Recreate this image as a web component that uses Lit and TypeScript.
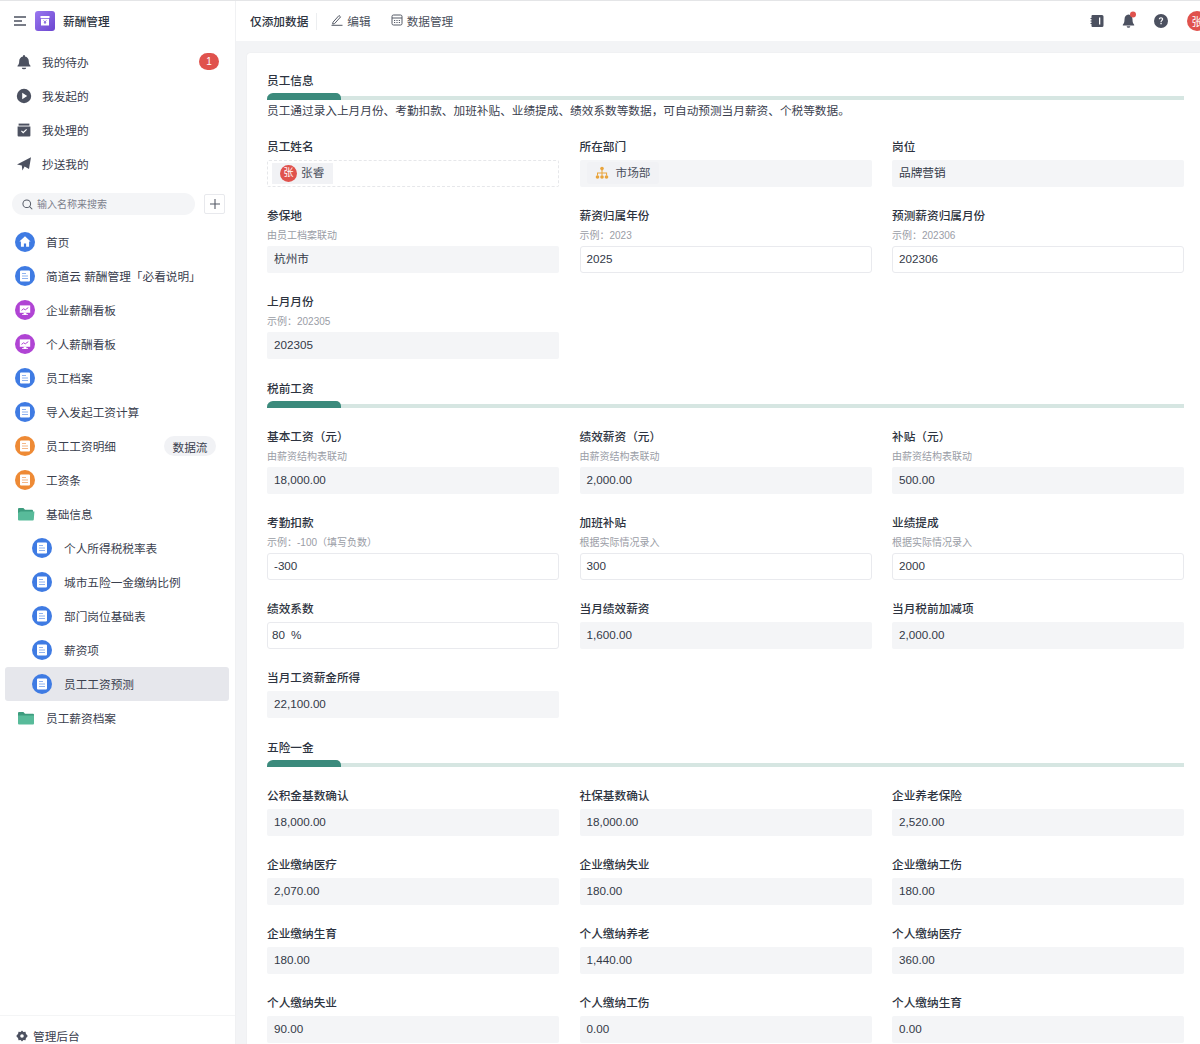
import { LitElement, html, css, svg } from "lit";
import { customElement } from "lit/decorators.js";

type Field = {
  label: string;
  help?: string;
  value?: string;
  edit?: boolean;
  kind?: "user" | "dept" | "percent";
};

type Section = { title: string; desc?: string; fields: Field[] };

const SECTIONS: Section[] = [
  {
    title: "员工信息",
    desc: "员工通过录入上月月份、考勤扣款、加班补贴、业绩提成、绩效系数等数据，可自动预测当月薪资、个税等数据。",
    fields: [
      { label: "员工姓名", kind: "user" },
      { label: "所在部门", kind: "dept" },
      { label: "岗位", value: "品牌营销" },
      { label: "参保地", help: "由员工档案联动", value: "杭州市" },
      { label: "薪资归属年份", help: "示例：2023", value: "2025", edit: true },
      { label: "预测薪资归属月份", help: "示例：202306", value: "202306", edit: true },
      { label: "上月月份", help: "示例：202305", value: "202305" },
    ],
  },
  {
    title: "税前工资",
    fields: [
      { label: "基本工资（元）", help: "由薪资结构表联动", value: "18,000.00" },
      { label: "绩效薪资（元）", help: "由薪资结构表联动", value: "2,000.00" },
      { label: "补贴（元）", help: "由薪资结构表联动", value: "500.00" },
      { label: "考勤扣款", help: "示例：-100（填写负数）", value: "-300", edit: true },
      { label: "加班补贴", help: "根据实际情况录入", value: "300", edit: true },
      { label: "业绩提成", help: "根据实际情况录入", value: "2000", edit: true },
      { label: "绩效系数", value: "80", edit: true, kind: "percent" },
      { label: "当月绩效薪资", value: "1,600.00" },
      { label: "当月税前加减项", value: "2,000.00" },
      { label: "当月工资薪金所得", value: "22,100.00" },
    ],
  },
  {
    title: "五险一金",
    fields: [
      { label: "公积金基数确认", value: "18,000.00" },
      { label: "社保基数确认", value: "18,000.00" },
      { label: "企业养老保险", value: "2,520.00" },
      { label: "企业缴纳医疗", value: "2,070.00" },
      { label: "企业缴纳失业", value: "180.00" },
      { label: "企业缴纳工伤", value: "180.00" },
      { label: "企业缴纳生育", value: "180.00" },
      { label: "个人缴纳养老", value: "1,440.00" },
      { label: "个人缴纳医疗", value: "360.00" },
      { label: "个人缴纳失业", value: "90.00" },
      { label: "个人缴纳工伤", value: "0.00" },
      { label: "个人缴纳生育", value: "0.00" },
    ],
  },
];

const docGlyph = (line: string) => svg`
  <path d="M6 4.600h8a1 1 0 0 1 1 1v9a1 1 0 0 1-1 1H6a1 1 0 0 1-1-1v-9a1 1 0 0 1 1-1z" fill="#fff"/>
  <path d="M7 7.500h4M7 10h6M7 12.500h6" stroke="${line}" stroke-width="1.100" fill="none"/>`;

const appIcon = (kind: string) => {
  if (kind === "home") {
    return html`<svg class="app-ic" viewBox="0 0 20 20">
      <circle cx="10" cy="10" r="10" fill="#3f7be3"/>
      <path d="M10 4.300 15.600 9.600h-1.500v5.200h-3v-3.300H8.900v3.300h-3V9.600H4.400z" fill="#fff"/>
    </svg>`;
  }
  if (kind === "chart") {
    return html`<svg class="app-ic" viewBox="0 0 20 20">
      <circle cx="10" cy="10" r="10" fill="#b044d4"/>
      <path d="M4.800 5.400h10.400v7.400H4.800z" fill="#fff"/>
      <path d="M8.600 12.800h2.800v1.400h1.600v.9H7v-.9h1.600z" fill="#fff"/>
      <path d="M6.500 10.400 8.600 8.800l1.700 1 3-2.200" stroke="#b044d4" stroke-width="1" fill="none"/>
    </svg>`;
  }
  const colors: Record<string, [string, string]> = {
    blue: ["#3f7be3", "#8fb3f0"],
    orange: ["#ee8a35", "#f4b888"],
  };
  const [bg, line] = colors[kind];
  return html`<svg class="app-ic" viewBox="0 0 20 20">
    <circle cx="10" cy="10" r="10" fill="${bg}"/>
    ${docGlyph(line)}
  </svg>`;
};

const folderIcon = (open: boolean) =>
  open
    ? html`<svg class="folder" viewBox="0 0 18 14">
        <path d="M1 2a1 1 0 0 1 1-1h4.400l1.600 1.700h7a1 1 0 0 1 1 1V5H4L1 10z" fill="#3d9c7e"/>
        <path d="M3.600 4.600H17.400l-.6 8a1 1 0 0 1-1 .9H2a1 1 0 0 1-1-1V6z" fill="#58bb9a"/>
      </svg>`
    : html`<svg class="folder" viewBox="0 0 18 14">
        <path d="M1 2a1 1 0 0 1 1-1h4.400l1.600 1.700h8a1 1 0 0 1 1 1V5H1z" fill="#3d9c7e"/>
        <path d="M1 4.400h16v8.100a1 1 0 0 1-1 1H2a1 1 0 0 1-1-1z" fill="#58bb9a"/>
      </svg>`;

const NAV_TOP = [
  {
    label: "我的待办",
    icon: svg`<path d="M8 1a1 1 0 0 1 1 1v.4c2.400.5 3.800 2.400 3.800 4.800 0 2.400.6 3.400 1.700 4.600v.7H1.500v-.7c1.100-1.200 1.700-2.200 1.700-4.600 0-2.400 1.400-4.300 3.800-4.800V2a1 1 0 0 1 1-1z"/><path d="M5.800 13.800h4.400a2.200 1.500 0 0 1-4.400 0z"/>`,
    badge: "1",
  },
  {
    label: "我发起的",
    icon: svg`<path fill-rule="evenodd" d="M8 .8a7.200 7.200 0 1 1 0 14.400A7.200 7.200 0 0 1 8 .8zM6.200 4.800v6.400L11.200 8z"/>`,
  },
  {
    label: "我处理的",
    icon: svg`<path d="M2.600 1.600h10.800v2H2.600z"/><path fill-rule="evenodd" d="M1.600 4.600h12.800v9a1 1 0 0 1-1 1H2.600a1 1 0 0 1-1-1zM5 9.200l2.200 2.200L11 7.800l-.8-.8-3 2.800-1.400-1.400z"/>`,
  },
  {
    label: "抄送我的",
    icon: svg`<path d="M15 1.200 13 13 8.600 10.600 6.400 14.600 5.800 9.600 1 8.400z"/>`,
  },
];

const NAV_APPS = [
  { label: "首页", icon: "home" },
  { label: "简道云 薪酬管理「必看说明」", icon: "blue" },
  { label: "企业薪酬看板", icon: "chart" },
  { label: "个人薪酬看板", icon: "chart" },
  { label: "员工档案", icon: "blue" },
  { label: "导入发起工资计算", icon: "blue" },
  { label: "员工工资明细", icon: "orange", tag: "数据流" },
  { label: "工资条", icon: "orange" },
];

const NAV_SUB = ["个人所得税税率表", "城市五险一金缴纳比例", "部门岗位基础表", "薪资项", "员工工资预测"];

@customElement("app-root")
export class AppRoot extends LitElement {
  static override styles = css`
    :host {
      display: flex;
      width: 1200px;
      height: 1044px;
      overflow: hidden;
      background: #f3f4f6;
      border-top: 1px solid #e4e5e7;
      box-sizing: border-box;
      font-family: "Liberation Sans", "Noto Sans CJK SC", sans-serif;
      font-size: 11.67px;
      font-kerning: none;
      text-spacing-trim: space-all;
      color: #2d3340;
    }

    .side {
      width: 235px;
      flex: none;
      background: #fff;
      display: flex;
      flex-direction: column;
    }

    .brand {
      display: flex;
      align-items: center;
      height: 40px;
      padding-left: 14px;
      flex: none;
    }

    .burger {
      width: 12px;
      height: 10px;
      margin-right: 9px;
    }

    .logo {
      width: 20px;
      height: 20px;
      margin-right: 8px;
    }

    .brand b {
      font-weight: 500;
      padding-bottom: 2px;
    }

    .top-nav {
      padding-top: 3px;
    }

    .row {
      display: flex;
      align-items: center;
      height: 34px;
      color: #3a404e;
    }

    .top-nav .row {
      padding-left: 16px;
    }

    .top-ic {
      width: 16px;
      height: 16px;
      margin: 2px 10px 0 0;
      fill: #4c5160;
    }

    .badge {
      margin-left: auto;
      margin-right: 16px;
      width: 20px;
      height: 17px;
      border-radius: 9px;
      background: #e0524d;
      color: #fff;
      font-size: 10px;
      display: flex;
      align-items: center;
      justify-content: center;
    }

    .search-row {
      display: flex;
      align-items: center;
      padding: 13px 10px 10px 12px;
    }

    .search {
      display: flex;
      align-items: center;
      width: 183px;
      height: 22px;
      border-radius: 11px;
      background: #f4f5f7;
      padding: 0 0 2px 10px;
      box-sizing: border-box;
      font-size: 10px;
      color: #7c808c;
    }

    .search svg {
      width: 11px;
      height: 11px;
      margin: 2px 4px 0 0;
    }

    .plus {
      width: 21px;
      height: 20px;
      margin-left: 9px;
      border: 1px solid #e8e9ed;
      border-radius: 2px;
      box-sizing: border-box;
      display: flex;
      align-items: center;
      justify-content: center;
    }

    .plus svg {
      width: 10px;
      height: 10px;
    }

    .apps {
      flex: 1;
    }

    .apps .row {
      padding: 0 0 2px 15px;
      box-sizing: border-box;
    }

    .app-ic {
      width: 20px;
      height: 20px;
      margin: 2px 11px 0 0;
      flex: none;
    }

    .folder {
      width: 18px;
      height: 14px;
      margin: 2px 11px 0 2px;
      flex: none;
    }

    .apps .row.sub {
      margin: 0 6px 0 5px;
      padding-left: 27px;
      border-radius: 3px;
    }

    .sub .app-ic {
      margin-right: 12px;
    }

    .sub.active {
      background: #e6e7ec;
    }

    .tag {
      margin-left: auto;
      margin-right: 19px;
      margin-top: 2px;
      width: 52px;
      height: 20px;
      border-radius: 10px;
      background: #f1f2f5;
      display: flex;
      align-items: center;
      justify-content: center;
    }

    .foot {
      flex: none;
      height: 28px;
      border-top: 1px solid #f4f5f6;
      display: flex;
      align-items: flex-end;
      padding-left: 16px;
      color: #3a404e;
    }

    .foot-in {
      display: flex;
      align-items: center;
      height: 17px;
    }

    .foot svg {
      width: 12px;
      height: 12px;
      margin-right: 5px;
      fill: #4c5160;
    }

    .main {
      flex: 1;
      min-width: 0;
      display: flex;
      flex-direction: column;
      border-left: 1px solid #f0f1f3;
    }

    .bar {
      flex: none;
      height: 40px;
      background: #fff;
      display: flex;
      align-items: center;
      padding-left: 14px;
      color: #4a4f5c;
    }

    .bar b {
      font-weight: 500;
      color: #2d3340;
      padding-bottom: 2px;
    }

    .bar .sep {
      width: 1px;
      height: 17px;
      background: #eceef0;
      margin: 0 14px 0 8px;
    }

    .bar .act {
      display: flex;
      align-items: center;
      margin-right: 20px;
      padding-bottom: 2px;
    }

    .bar .act svg {
      width: 12px;
      height: 12px;
      margin-right: 4px;
    }

    .tools {
      margin-left: auto;
      display: flex;
      align-items: center;
      margin-right: -7px;
    }

    .tools svg {
      width: 14px;
      height: 16px;
      fill: #4c5160;
      margin-right: 18px;
    }

    .tools .bell {
      overflow: visible;
    }

    .avatar {
      width: 20px;
      height: 20px;
      border-radius: 50%;
      background: #e0524d;
      color: #fff;
      display: flex;
      align-items: center;
      justify-content: center;
      font-size: 11px;
      margin-left: 1px;
      flex: none;
    }

    .body {
      flex: 1;
      min-height: 0;
      padding: 12px 0 0 11px;
      overflow: hidden;
    }

    .card {
      background: #fff;
      border-radius: 3px 0 0 0;
      box-shadow: 0 0 1px rgba(0, 0, 0, 0.12);
      padding: 19px 16px 40px 20px;
    }

    .sec-title {
      font-weight: 500;
      height: 17px;
      line-height: 17px;
    }

    .sec-bar {
      position: relative;
      height: 4px;
      margin-top: 7px;
      background: #d6e6e2;
    }

    .sec-bar i {
      display: block;
      position: absolute;
      top: -3px;
      left: 0;
      width: 73.5px;
      height: 7px;
      background: #3b8a7c;
      border-radius: 6px 5px 0 0;
    }

    .sec-desc {
      margin-top: 2px;
      height: 17px;
      line-height: 17px;
      color: #3a404e;
    }

    .grid {
      display: grid;
      grid-template-columns: repeat(3, 1fr);
      column-gap: 20.5px;
      row-gap: 20px;
      padding-top: 20px;
    }

    .sec-desc + .grid {
      padding-top: 19px;
    }

    section + section {
      margin-top: 21px;
    }

    .f-label {
      font-weight: 500;
      height: 19px;
      line-height: 18px;
    }

    .f-help {
      height: 17px;
      line-height: 17px;
      margin-top: 1px;
      font-size: 10px;
      color: #9a9da6;
    }

    .f-box {
      margin-top: 2.5px;
      height: 27.5px;
      box-sizing: border-box;
      display: flex;
      align-items: center;
      padding: 0 7px;
      background: #f4f5f7;
      border-radius: 2px;
      color: #333947;
      line-height: 1;
    }

    .f-help + .f-box {
      margin-top: 1.5px;
    }

    .f-box.edit {
      background: #fff;
      border: 1px solid #e9eaee;
      border-radius: 3px;
      padding: 0 6px;
    }

    .f-box.pct-box {
      padding-left: 4px;
    }

    .f-box.user {
      background: #fff;
      border: 1px dashed #e6e7ea;
      padding: 0 4px;
    }

    .chip {
      display: flex;
      align-items: center;
      height: 21px;
      padding: 0 9px 0 8px;
      background: #f1f2f5;
      color: #4a4f5c;
    }

    .chip .av {
      width: 17px;
      height: 17px;
      border-radius: 50%;
      background: #e0524d;
      color: #fff;
      font-size: 10px;
      display: flex;
      align-items: center;
      justify-content: center;
      margin-right: 4px;
    }

    .dept .chip {
      background: #f1f2f5;
      height: 22px;
      border-radius: 3px;
    }

    .dept .chip svg {
      width: 14px;
      height: 14px;
      margin-right: 7px;
    }

    .pct {
      margin-left: 6px;
    }
  `;

  renderField(f: Field) {
    let box;
    if (f.kind === "user") {
      box = html`<div class="f-box user">
        <span class="chip"><span class="av">张</span>张睿</span>
      </div>`;
    } else if (f.kind === "dept") {
      box = html`<div class="f-box dept">
        <span class="chip">
          <svg viewBox="0 0 14 14">
            <circle cx="7" cy="2.600" r="1.800" fill="#e9a43c"/>
            <path d="M6.500 3.500h1v3h4.600v3h-1V7.500H7.500v2h-1v-2H3v2H2v-3h4.500z" fill="#e9a43c"/>
            <circle cx="2.500" cy="11" r="1.800" fill="#e9a43c"/>
            <circle cx="7" cy="11" r="1.800" fill="#e9a43c"/>
            <circle cx="11.500" cy="11" r="1.800" fill="#e9a43c"/>
          </svg>
          市场部
        </span>
      </div>`;
    } else if (f.kind === "percent") {
      box = html`<div class="f-box edit pct-box">${f.value}<span class="pct">%</span></div>`;
    } else {
      box = html`<div class="f-box ${f.edit ? "edit" : ""}">${f.value}</div>`;
    }
    return html`<div>
      <div class="f-label">${f.label}</div>
      ${f.help ? html`<div class="f-help">${f.help}</div>` : ""}
      ${box}
    </div>`;
  }

  renderSide() {
    return html`<aside class="side">
      <div class="brand">
        <svg class="burger" viewBox="0 0 12 10" fill="none" stroke="#4c5160" stroke-width="1.300">
          <path d="M0 1h12M0 5h8M0 9h12"/>
        </svg>
        <svg class="logo" viewBox="0 0 20 20">
          <defs>
            <linearGradient id="lg" x1="0" y1="0" x2="1" y2="1">
              <stop offset="0" stop-color="#9a78f0"/>
              <stop offset="1" stop-color="#6b45cf"/>
            </linearGradient>
          </defs>
          <rect width="20" height="20" rx="3" fill="url(#lg)"/>
          <path d="M5.500 5h9v2h-9z" fill="#fff"/>
          <path d="M6 7.800h8v6.700H6z" fill="#fff"/>
          <path d="M8.600 9.400 10 11l1.400-1.600M10 11v2M8.800 11.600h2.400" stroke="#7a55da" stroke-width=".8" fill="none"/>
        </svg>
        <b>薪酬管理</b>
      </div>
      <div class="top-nav">
        ${NAV_TOP.map(
          (n) => html`<div class="row">
            <svg class="top-ic" viewBox="0 0 16 16">${n.icon}</svg>
            ${n.label}
            ${n.badge ? html`<span class="badge">${n.badge}</span>` : ""}
          </div>`
        )}
      </div>
      <div class="search-row">
        <div class="search">
          <svg viewBox="0 0 12 12" fill="none" stroke="#555a66" stroke-width="1.100">
            <circle cx="5.200" cy="5.200" r="4.200"/>
            <path d="M8.300 8.300 11.200 11.200"/>
          </svg>
          输入名称来搜索
        </div>
        <div class="plus">
          <svg viewBox="0 0 10 10" stroke="#555a66" stroke-width="1.100"><path d="M5 0v10M0 5h10"/></svg>
        </div>
      </div>
      <div class="apps">
        ${NAV_APPS.map(
          (a) => html`<div class="row">
            ${appIcon(a.icon)}${a.label}
            ${a.tag ? html`<span class="tag">${a.tag}</span>` : ""}
          </div>`
        )}
        <div class="row">${folderIcon(true)}基础信息</div>
        ${NAV_SUB.map(
          (s, i) => html`<div class="row sub ${i === 4 ? "active" : ""}">${appIcon("blue")}${s}</div>`
        )}
        <div class="row">${folderIcon(false)}员工薪资档案</div>
      </div>
      <div class="foot">
        <div class="foot-in">
          <svg viewBox="0 0 12 12">
            <path fill-rule="evenodd" d="M6 .4 7.400 2l2.100-.3.4 2.100L11.800 6l-1.900 2.200-.4 2.100-2.100-.3L6 11.600 4.600 10l-2.100.3-.4-2.100L.2 6l1.900-2.200.4-2.100L4.600 2zM6 4.200a1.800 1.800 0 1 0 0 3.600 1.800 1.800 0 0 0 0-3.600z"/>
          </svg>
          管理后台
        </div>
      </div>
    </aside>`;
  }

  renderBar() {
    return html`<div class="bar">
      <b>仅添加数据</b>
      <span class="sep"></span>
      <span class="act">
        <svg viewBox="0 0 12 12" fill="none" stroke="#555a66" stroke-width="1">
          <path d="M2 8.200 8 1.500l1.600 1.400-6 6.700-1.900.5zM.5 11.300h11"/>
        </svg>
        编辑
      </span>
      <span class="act">
        <svg viewBox="0 0 12 12" fill="none" stroke="#555a66" stroke-width="1">
          <rect x="1" y="1" width="10" height="10" rx="1.500"/>
          <path d="M1 4h10M3 6.500h1.200M5.400 6.500h1.200M7.800 6.500h1.200M3 8.500h1.200M5.400 8.500h1.200M7.800 8.500h1.200"/>
        </svg>
        数据管理
      </span>
      <div class="tools">
        <svg viewBox="0 0 14 16">
          <path fill-rule="evenodd" d="M2.500 2h9.500a1.500 1.500 0 0 1 1.500 1.500v9a1.500 1.500 0 0 1-1.500 1.500H2.500a1 1 0 0 1-1-1V3a1 1 0 0 1 1-1zM9 4.500v7h1.300v-7z"/>
          <path d="M.5 5h1.500v1H.5zM.5 7.500h1.500v1H.5zM.5 10h1.500v1H.5z"/>
        </svg>
        <svg class="bell" viewBox="0 0 14 16">
          <path d="M6.500 1.500c2.500.2 4 2.300 4 5 0 2.700.6 4 1.700 5.300v.7H.8v-.7C1.900 10.500 2.500 9.200 2.500 6.500c0-2.700 1.500-4.800 4-5z"/>
          <path d="M4.700 13.300h3.600a1.800 1.500 0 0 1-3.600 0z"/>
          <circle cx="11" cy="1.500" r="3" fill="#e0524d"/>
        </svg>
        <svg viewBox="0 0 14 16">
          <path fill-rule="evenodd" d="M7 1a7 7 0 1 1 0 14A7 7 0 0 1 7 1zM4.800 6.300h1.300c0-.6.400-1 .9-1s.9.300.9.900c0 .9-1.500 1.200-1.500 3h1.200c0-1.300 1.600-1.500 1.600-3.100 0-1.100-.9-1.900-2.200-1.900-1.300 0-2.200.9-2.200 2.100zM6.400 10h1.300v1.300H6.400z"/>
        </svg>
        <span class="avatar">张</span>
      </div>
    </div>`;
  }

  override render() {
    return html`
      ${this.renderSide()}
      <div class="main">
        ${this.renderBar()}
        <div class="body">
          <div class="card">
            ${SECTIONS.map(
              (s) => html`<section>
                <div class="sec-title">${s.title}</div>
                <div class="sec-bar"><i></i></div>
                ${s.desc ? html`<div class="sec-desc">${s.desc}</div>` : ""}
                <div class="grid">${s.fields.map((f) => this.renderField(f))}</div>
              </section>`
            )}
          </div>
        </div>
      </div>
    `;
  }
}
